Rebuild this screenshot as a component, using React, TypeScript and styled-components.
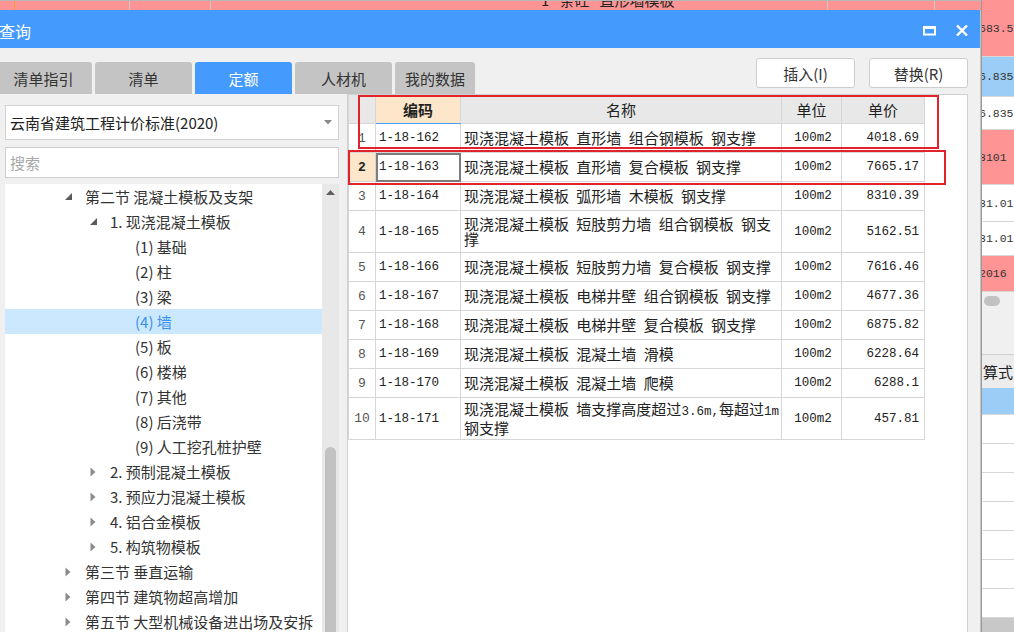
import { createGlobalStyle, styled } from "styled-components";

const GlobalStyle = createGlobalStyle`
  html, body {
    margin: 0;
    padding: 0;
  }
  body {
    font-family: "Noto Sans CJK SC", "Noto Sans", sans-serif;
    background: #ffffff;
  }
`;

type TreeItem = { level: number; text: string; state: "open" | "closed" | "leaf"; selected?: boolean };

const treeItems: TreeItem[] = [
  { level: 0, text: "第二节 混凝土模板及支架", state: "open" },
  { level: 1, text: "1. 现浇混凝土模板", state: "open" },
  { level: 2, text: "(1) 基础", state: "leaf" },
  { level: 2, text: "(2) 柱", state: "leaf" },
  { level: 2, text: "(3) 梁", state: "leaf" },
  { level: 2, text: "(4) 墙", state: "leaf", selected: true },
  { level: 2, text: "(5) 板", state: "leaf" },
  { level: 2, text: "(6) 楼梯", state: "leaf" },
  { level: 2, text: "(7) 其他", state: "leaf" },
  { level: 2, text: "(8) 后浇带", state: "leaf" },
  { level: 2, text: "(9) 人工挖孔桩护壁", state: "leaf" },
  { level: 1, text: "2. 预制混凝土模板", state: "closed" },
  { level: 1, text: "3. 预应力混凝土模板", state: "closed" },
  { level: 1, text: "4. 铝合金模板", state: "closed" },
  { level: 1, text: "5. 构筑物模板", state: "closed" },
  { level: 0, text: "第三节 垂直运输", state: "closed" },
  { level: 0, text: "第四节 建筑物超高增加", state: "closed" },
  { level: 0, text: "第五节 大型机械设备进出场及安拆", state: "closed" },
];

type Row = { no: number; code: string; name: string; unit: string; price: string; tall?: boolean };

const rows: Row[] = [
  { no: 1, code: "1-18-162", name: "现浇混凝土模板 直形墙 组合钢模板 钢支撑", unit: "100m2", price: "4018.69" },
  { no: 2, code: "1-18-163", name: "现浇混凝土模板 直形墙 复合模板 钢支撑", unit: "100m2", price: "7665.17" },
  { no: 3, code: "1-18-164", name: "现浇混凝土模板 弧形墙 木模板 钢支撑", unit: "100m2", price: "8310.39" },
  { no: 4, code: "1-18-165", name: "现浇混凝土模板 短肢剪力墙 组合钢模板 钢支\n撑", unit: "100m2", price: "5162.51", tall: true },
  { no: 5, code: "1-18-166", name: "现浇混凝土模板 短肢剪力墙 复合模板 钢支撑", unit: "100m2", price: "7616.46" },
  { no: 6, code: "1-18-167", name: "现浇混凝土模板 电梯井壁 组合钢模板 钢支撑", unit: "100m2", price: "4677.36" },
  { no: 7, code: "1-18-168", name: "现浇混凝土模板 电梯井壁 复合模板 钢支撑", unit: "100m2", price: "6875.82" },
  { no: 8, code: "1-18-169", name: "现浇混凝土模板 混凝土墙 滑模", unit: "100m2", price: "6228.64" },
  { no: 9, code: "1-18-170", name: "现浇混凝土模板 混凝土墙 爬模", unit: "100m2", price: "6288.1" },
  { no: 10, code: "1-18-171", name: "现浇混凝土模板 墙支撑高度超过3.6m,每超过1m\n钢支撑", unit: "100m2", price: "457.81", tall: true },
];

// the app behind the dialog, right edge
const bgCells = [
  { h: 57, bg: "#ff9494", text: "683.5" },
  { h: 40, bg: "#9ccdf7", text: "6.835" },
  { h: 33, bg: "#ffffff", text: "6.835" },
  { h: 55, bg: "#ff9494", text: "3101" },
  { h: 37, bg: "#ffffff", text: "31.01" },
  { h: 34, bg: "#ffffff", text: "31.01" },
  { h: 36, bg: "#ff9494", text: "2016" },
];

// ascii runs (digits, m, comma) are drawn half-width like the grid's song font
const splitName = (name: string) => name.split(/([\x21-\x7e]+)/).filter(Boolean);

export default function App() {
  const selectedRow = 2;
  return (
    <>
      <GlobalStyle />
      <Screen>
        <LeftArea>
          <TopStrip>
            <StripCell $w={15} $line="#f0a030" />
            <StripCell $w={115} />
            <StripCell $w={81} />
            <StripCell $w={617}>
              <StripText>1&nbsp;&nbsp;&nbsp;条砼&nbsp;&nbsp;&nbsp;直形墙模板</StripText>
            </StripCell>
            <StripCell $w={107} />
            <StripCell $w={51} />
          </TopStrip>
          <Dialog>
            <TitleBar>
              <Title>查询</Title>
              <TitleIcons>
                <svg width="13" height="10" viewBox="0 0 13 10">
                  <rect x="1" y="1.5" width="11" height="7" fill="none" stroke="#fff" strokeWidth="2" />
                  <rect x="0" y="0" width="13" height="3" fill="#fff" />
                </svg>
                <svg width="12" height="11" viewBox="0 0 12 11">
                  <path d="M1 0.5 L11 10.5 M11 0.5 L1 10.5" stroke="#fff" strokeWidth="2.4" />
                </svg>
              </TitleIcons>
            </TitleBar>
            <Toolbar>
              <Tabs>
                <Tab>清单指引</Tab>
                <Tab>清单</Tab>
                <Tab $active>定额</Tab>
                <Tab>人材机</Tab>
                <Tab $w={80}>我的数据</Tab>
              </Tabs>
              <Buttons>
                <Button>插入(I)</Button>
                <Button>替换(R)</Button>
              </Buttons>
            </Toolbar>
            <Main>
              <LeftPanel>
                <Select>
                  <span>云南省建筑工程计价标准(2020)</span>
                  <svg width="8" height="5" viewBox="0 0 8 5">
                    <path d="M0 0 H8 L4 4.5 Z" fill="#8a8a8a" />
                  </svg>
                </Select>
                <Search placeholder="搜索" />
                <TreeBox>
                  <TreeList>
                    {treeItems.map((item, i) => (
                      <TreeRow key={i} $level={item.level} $selected={item.selected}>
                        <Toggle>
                          {item.state === "open" && (
                            <svg width="7" height="7" viewBox="0 0 7 7">
                              <path d="M7 0 V7 H0 Z" fill="#5a5a5a" />
                            </svg>
                          )}
                          {item.state === "closed" && (
                            <svg width="6" height="10" viewBox="0 0 6 10">
                              <path d="M0.5 0.5 L5.5 5 L0.5 9.5 Z" fill="#8c8c8c" />
                            </svg>
                          )}
                        </Toggle>
                        <span>{item.text}</span>
                      </TreeRow>
                    ))}
                  </TreeList>
                  <ScrollBar>
                    <ScrollArrow>
                      <svg width="9" height="5" viewBox="0 0 9 5">
                        <path d="M0 5 L4.5 0 L9 5 Z" fill="#606060" />
                      </svg>
                    </ScrollArrow>
                    <ScrollTrack>
                      <Thumb />
                    </ScrollTrack>
                  </ScrollBar>
                </TreeBox>
              </LeftPanel>
              <GridPanel>
                <Grid>
                  <colgroup>
                    <col style={{ width: 27 }} />
                    <col style={{ width: 85 }} />
                    <col style={{ width: 321 }} />
                    <col style={{ width: 60 }} />
                    <col style={{ width: 83 }} />
                  </colgroup>
                  <thead>
                    <tr>
                      <HeadCell />
                      <HeadCell $active>编码</HeadCell>
                      <HeadCell>名称</HeadCell>
                      <HeadCell>单位</HeadCell>
                      <HeadCell>单价</HeadCell>
                    </tr>
                  </thead>
                  <tbody>
                    {rows.map((r) => {
                      const sel = r.no === selectedRow;
                      return (
                        <tr key={r.no}>
                          <RowHead $tall={r.tall} $selected={sel}>{r.no}</RowHead>
                          <Cell $tall={r.tall} $mono $focus={sel}>{r.code}</Cell>
                          <Cell $tall={r.tall}>
                            <NameText>
                              {splitName(r.name).map((part, i) =>
                                /^[\x21-\x7e]+$/.test(part) ? <Half key={i}>{part}</Half> : part
                              )}
                            </NameText>
                          </Cell>
                          <Cell $tall={r.tall} $mono $align="center">{r.unit}</Cell>
                          <Cell $tall={r.tall} $mono $align="right">{r.price}</Cell>
                        </tr>
                      );
                    })}
                  </tbody>
                </Grid>
                <Mark $left={10} $top={0} $width={581} $height={54} />
                <Mark $left={0} $top={55} $width={598} $height={35} />
              </GridPanel>
            </Main>
          </Dialog>
        </LeftArea>
        <BgColumn>
          {bgCells.map((c, i) => (
            <BgCell key={i} $h={c.h} $bg={c.bg}>
              <BgText>{c.text}</BgText>
            </BgCell>
          ))}
          <BgScroll>
            <BgThumb />
          </BgScroll>
          <BgGap $h={44} />
          <BgHead>算式</BgHead>
          <BgCell $h={27} $bg="#9ccdf7" />
          {[0, 1, 2, 3, 4, 5, 6].map((i) => (
            <BgCell key={i} $h={29} $bg="#ffffff" />
          ))}
          <BgGap $bg="#c8c8c8" />
        </BgColumn>
      </Screen>
    </>
  );
}

const Screen = styled.div`
  width: 1014px;
  height: 632px;
  overflow: hidden;
  display: flex;
  background: #f0f0f0;
`;

const LeftArea = styled.div`
  width: 981px;
  display: flex;
  flex-direction: column;
`;

const TopStrip = styled.div`
  height: 10px;
  display: flex;
  background: #ff9494;
  border-top: 1px solid #b8b8b8;
  box-sizing: border-box;
  overflow: hidden;
`;

const StripCell = styled.div<{ $w: number; $line?: string }>`
  width: ${(p) => p.$w}px;
  flex-shrink: 0;
  border-right: 1px solid ${(p) => p.$line ?? "#c8c8c8"};
  box-sizing: border-box;
  overflow: hidden;
`;

const StripText = styled.div`
  margin: -9px 0 0 330px;
  font-size: 15px;
  line-height: 16px;
  color: #222;
  white-space: nowrap;
`;

const Dialog = styled.div`
  flex: 1;
  margin-left: -5px;
  display: flex;
  flex-direction: column;
  background: #f0f0f0;
  border-right: 1px solid #c4c4c4;
  min-height: 0;
`;

const TitleBar = styled.div`
  height: 38px;
  flex-shrink: 0;
  background: #459afe;
  display: flex;
  align-items: center;
  justify-content: space-between;
  padding: 0 12px 0 4px;
`;

const Title = styled.div`
  color: #ffffff;
  font-size: 16px;
  padding-top: 4px;
`;

const TitleIcons = styled.div`
  display: flex;
  align-items: center;
  gap: 20px;
  padding-top: 3px;
`;

const Toolbar = styled.div`
  height: 46px;
  flex-shrink: 0;
  display: flex;
  justify-content: space-between;
  padding-right: 12px;
`;

const Tabs = styled.div`
  align-self: flex-end;
  display: flex;
  gap: 3px;
`;

const Tab = styled.div<{ $active?: boolean; $w?: number }>`
  width: ${(p) => p.$w ?? 97}px;
  height: 32px;
  border-radius: 3px 3px 0 0;
  background: ${(p) => (p.$active ? "#459afe" : "#c4c4c4")};
  color: ${(p) => (p.$active ? "#ffffff" : "#333333")};
  font-size: 15px;
  display: flex;
  align-items: center;
  justify-content: center;
`;

const Buttons = styled.div`
  margin-top: 10px;
  display: flex;
  gap: 14px;
  align-self: flex-start;
`;

const Button = styled.button`
  width: 99px;
  height: 30px;
  background: #ffffff;
  border: 1px solid #cdcdcd;
  border-radius: 3px;
  font-family: inherit;
  font-size: 15px;
  color: #333;
  padding: 0;
`;

const Main = styled.div`
  flex: 1;
  min-height: 0;
  display: flex;
  gap: 8px;
  padding: 0 12px 0 10px;
`;

const LeftPanel = styled.div`
  width: 334px;
  flex-shrink: 0;
  display: flex;
  flex-direction: column;
  padding-top: 11px;
`;

const Select = styled.div`
  height: 35px;
  box-sizing: border-box;
  background: #ffffff;
  border: 1px solid #d2d2d2;
  display: flex;
  align-items: center;
  justify-content: space-between;
  padding: 0 6px 0 4px;
  font-size: 15px;
  color: #222;
`;

const Search = styled.input`
  margin-top: 7px;
  height: 31px;
  box-sizing: border-box;
  border: 1px solid #cfcfcf;
  background: #ffffff;
  padding: 0 4px;
  font-family: inherit;
  font-size: 15px;
  outline: none;
  &::placeholder {
    color: #a8a8a8;
  }
`;

const TreeBox = styled.div`
  margin-top: 6px;
  flex: 1;
  min-height: 0;
  display: flex;
  background: #ffffff;
`;

const TreeList = styled.div`
  flex: 1;
  display: flex;
  flex-direction: column;
`;

const TreeRow = styled.div<{ $level: number; $selected?: boolean }>`
  height: 25px;
  flex-shrink: 0;
  display: flex;
  align-items: center;
  padding-left: ${(p) => 60 + p.$level * 25}px;
  font-size: 15px;
  color: ${(p) => (p.$selected ? "#3a8ff0" : "#333333")};
  background: ${(p) => (p.$selected ? "#cce8ff" : "transparent")};
  white-space: nowrap;
`;

const Toggle = styled.span`
  width: 20px;
  flex-shrink: 0;
  display: flex;
  align-items: center;
`;

const ScrollBar = styled.div`
  width: 17px;
  flex-shrink: 0;
  background: #e8e8e8;
  display: flex;
  flex-direction: column;
`;

const ScrollArrow = styled.div`
  height: 16px;
  display: flex;
  align-items: center;
  justify-content: center;
`;

const ScrollTrack = styled.div`
  flex: 1;
  display: flex;
  flex-direction: column;
  padding: 247px 3px 0 3px;
`;

const Thumb = styled.div`
  flex: 1;
  background: #c2c2c2;
  border-radius: 6px 6px 0 0;
`;

const GridPanel = styled.div`
  flex: 1;
  position: relative;
  background: #ffffff;
  border: 1px solid #d0d0d0;
  border-bottom: none;
`;

const Grid = styled.table`
  border-collapse: collapse;
  table-layout: fixed;
  width: 576px;
  color: #222;
`;

const HeadCell = styled.th<{ $active?: boolean }>`
  height: 28px;
  padding: 0;
  border: 1px solid #d6d6d6;
  border-top: none;
  border-bottom: 1px solid ${(p) => (p.$active ? "#4a9cfe" : "#d6d6d6")};
  background: ${(p) => (p.$active ? "#fde6c9" : "#e8e8e8")};
  font-size: 15px;
  font-weight: ${(p) => (p.$active ? 700 : 400)};
  text-align: center;
`;

const RowHead = styled.td<{ $tall?: boolean; $selected?: boolean }>`
  height: ${(p) => (p.$tall ? 41 : 28)}px;
  padding: 0;
  border: 1px solid #d6d6d6;
  text-align: center;
  font-family: "Liberation Mono", "DejaVu Sans Mono", monospace;
  font-size: 13px;
  font-weight: ${(p) => (p.$selected ? 700 : 400)};
  color: ${(p) => (p.$selected ? "#222" : "#555")};
  background: ${(p) => (p.$selected ? "#fde6c9" : "#ffffff")};
`;

const Cell = styled.td<{ $tall?: boolean; $mono?: boolean; $align?: string; $focus?: boolean }>`
  height: ${(p) => (p.$tall ? 41 : 28)}px;
  padding: 0 ${(p) => (p.$align === "right" ? 5 : 0)}px 0 3px;
  border: 1px solid #d6d6d6;
  text-align: ${(p) => p.$align ?? "left"};
  white-space: nowrap;
  overflow: hidden;
  font-family: ${(p) => (p.$mono ? `"Liberation Mono", "DejaVu Sans Mono", monospace` : "inherit")};
  font-size: ${(p) => (p.$mono ? 12.5 : 15)}px;
  outline: ${(p) => (p.$focus ? "2px solid #7c7c7c" : "none")};
  outline-offset: -2px;
`;

const NameText = styled.div`
  white-space: pre;
  word-spacing: 4px;
  line-height: 15px;
  padding-bottom: 2px;
`;

const Half = styled.span`
  font-family: "Liberation Mono", "DejaVu Sans Mono", monospace;
  font-size: 12.5px;
  word-spacing: 0;
`;

const Mark = styled.div<{ $left: number; $top: number; $width: number; $height: number }>`
  position: absolute;
  left: ${(p) => p.$left}px;
  top: ${(p) => p.$top}px;
  width: ${(p) => p.$width}px;
  height: ${(p) => p.$height}px;
  box-sizing: border-box;
  border: 2px solid #e3232b;
  pointer-events: none;
`;

const BgColumn = styled.div`
  flex: 1;
  display: flex;
  flex-direction: column;
  background: #ffffff;
  border-left: 1px solid #9a9a9a;
  overflow: hidden;
`;

const BgCell = styled.div<{ $h: number; $bg: string }>`
  height: ${(p) => p.$h}px;
  flex-shrink: 0;
  box-sizing: border-box;
  background: ${(p) => p.$bg};
  border-bottom: 1px solid #d8d8d8;
  display: flex;
  align-items: center;
  overflow: hidden;
`;

const BgText = styled.span`
  margin-left: -3px;
  font-family: "Liberation Mono", "DejaVu Sans Mono", monospace;
  font-size: 11.5px;
  color: #333;
  white-space: nowrap;
`;

const BgScroll = styled.div`
  height: 18px;
  flex-shrink: 0;
  background: #f0f0f0;
  display: flex;
  align-items: center;
  padding-left: 2px;
`;

const BgThumb = styled.div`
  width: 16px;
  height: 10px;
  border-radius: 5px;
  background: #c2c2c2;
`;

const BgGap = styled.div<{ $bg?: string; $h?: number }>`
  flex: ${(p) => (p.$h ? `0 0 ${p.$h}px` : "1")};
  background: ${(p) => p.$bg ?? "#f0f0f0"};
`;

const BgHead = styled.div`
  height: 33px;
  flex-shrink: 0;
  background: #ececec;
  border-top: 1px solid #d0d0d0;
  display: flex;
  align-items: center;
  font-size: 15px;
  color: #222;
  padding-left: 1px;
`;
